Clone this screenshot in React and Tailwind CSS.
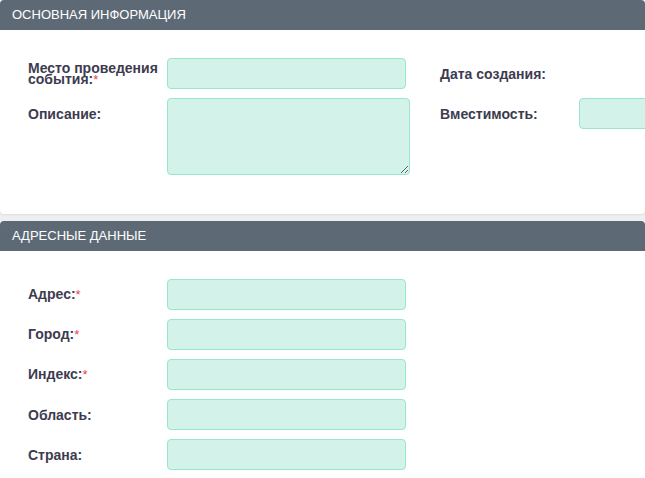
import React from 'react';

const inputCls =
  'h-[31px] rounded-[4px] border border-[#9ae6cc] bg-[#d3f3ea] outline-none';

function Label({ children, required, tight }) {
  return (
    <div className="flex h-[31px] w-[139px] shrink-0 items-center">
      <span
        className={
          'text-[14px] font-bold text-[#3d3b4f] ' + (tight ? 'leading-[11px]' : 'leading-4')
        }
      >
        {children}
        {required && <span className="text-[13px] font-normal text-[#f0404a]">*</span>}
      </span>
    </div>
  );
}

function Header({ title }) {
  return (
    <div className="flex h-[30px] items-center rounded-t-[4px] bg-[#5d6a75] px-3 text-[13px] text-white">
      {title}
    </div>
  );
}

export default function App() {
  return (
    <div
      className="min-h-screen overflow-hidden bg-[#efefef]"
      style={{ fontFamily: '"Liberation Sans", Arial, sans-serif' }}
    >
      <div className="rounded-b-[4px] bg-white shadow-[0_1px_2px_rgba(0,0,0,0.08)]">
        <Header title="ОСНОВНАЯ ИНФОРМАЦИЯ" />
        <div className="flex pl-[28px] pt-[28px] pb-[39px]">
          <div className="flex w-[412px] shrink-0 flex-col gap-[9px]">
            <div className="flex">
              <Label required tight>
                Место проведения события:
              </Label>
              <input className={inputCls + ' w-[239px]'} />
            </div>
            <div className="flex items-start">
              <Label>Описание:</Label>
              <textarea className="h-[77px] w-[243px] rounded-[4px] border border-[#9ae6cc] bg-[#d3f3ea] outline-none" />
            </div>
          </div>
          <div className="flex flex-col gap-[9px]">
            <div className="flex">
              <Label>Дата создания:</Label>
            </div>
            <div className="flex">
              <Label>Вместимость:</Label>
              <input className={inputCls + ' w-[120px]'} />
            </div>
          </div>
        </div>
      </div>

      <div className="mt-[7px] bg-white">
        <Header title="АДРЕСНЫЕ ДАННЫЕ" />
        <div className="flex flex-col gap-[9px] pl-[28px] pt-[28px] pb-[20px]">
          {[
            ['Адрес:', true],
            ['Город:', true],
            ['Индекс:', true],
            ['Область:', false],
            ['Страна:', false],
          ].map(([label, req]) => (
            <div key={label} className="flex">
              <Label required={req}>{label}</Label>
              <input className={inputCls + ' w-[239px]'} />
            </div>
          ))}
        </div>
      </div>
    </div>
  );
}
